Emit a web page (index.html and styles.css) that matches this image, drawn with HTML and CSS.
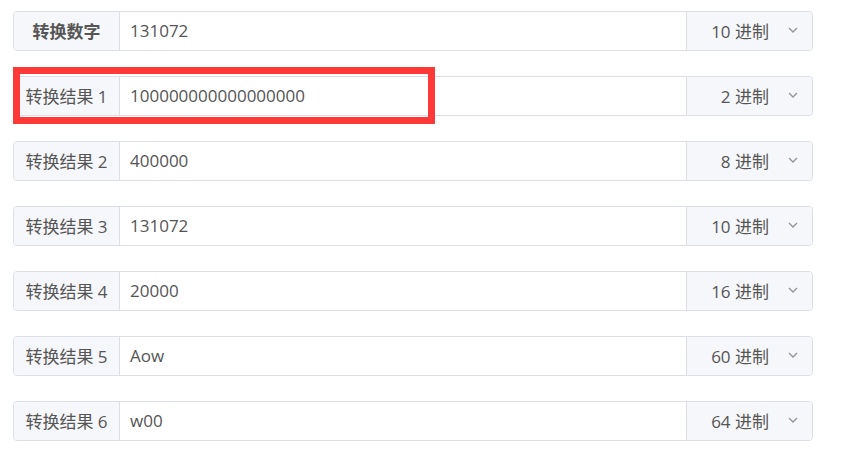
FILE: index.html
```html
<!DOCTYPE html>
<html lang="zh-CN">
<head>
    <meta charset="UTF-8">
    <meta name="viewport" content="width=device-width, initial-scale=1.0">
    <title>进制转换</title>
    <link rel="stylesheet" href="styles.css">
</head>
<body>
    <div class="converter">
        <div class="input-group">
            <div class="prepend prepend-bold">转换数字</div>
            <div class="value">131072</div>
            <div class="append">10 进制<svg class="chevron" viewBox="0 0 10 6"><polyline points="1,1 5,5 9,1"/></svg></div>
        </div>
        <div class="input-group">
            <div class="prepend">转换结果 1</div>
            <div class="value">100000000000000000</div>
            <div class="append">2 进制<svg class="chevron" viewBox="0 0 10 6"><polyline points="1,1 5,5 9,1"/></svg></div>
            <div class="highlight"></div>
        </div>
        <div class="input-group">
            <div class="prepend">转换结果 2</div>
            <div class="value">400000</div>
            <div class="append">8 进制<svg class="chevron" viewBox="0 0 10 6"><polyline points="1,1 5,5 9,1"/></svg></div>
        </div>
        <div class="input-group">
            <div class="prepend">转换结果 3</div>
            <div class="value">131072</div>
            <div class="append">10 进制<svg class="chevron" viewBox="0 0 10 6"><polyline points="1,1 5,5 9,1"/></svg></div>
        </div>
        <div class="input-group">
            <div class="prepend">转换结果 4</div>
            <div class="value">20000</div>
            <div class="append">16 进制<svg class="chevron" viewBox="0 0 10 6"><polyline points="1,1 5,5 9,1"/></svg></div>
        </div>
        <div class="input-group">
            <div class="prepend">转换结果 5</div>
            <div class="value">Aow</div>
            <div class="append">60 进制<svg class="chevron" viewBox="0 0 10 6"><polyline points="1,1 5,5 9,1"/></svg></div>
        </div>
        <div class="input-group">
            <div class="prepend">转换结果 6</div>
            <div class="value">w00</div>
            <div class="append">64 进制<svg class="chevron" viewBox="0 0 10 6"><polyline points="1,1 5,5 9,1"/></svg></div>
        </div>
    </div>
</body>
</html>
```

FILE: styles.css
```css
body {
    margin: 0;
    font-family: "Open Sans", "Noto Sans CJK SC", sans-serif;
    font-size: 17px;
    color: #555;
    background: #fff;
}
.converter {
    padding: 11px 36px 0 13px;
}
.input-group {
    position: relative;
    display: flex;
    height: 40px;
    box-sizing: border-box;
    border: 1px solid #dcdfe6;
    border-radius: 4px;
    margin-bottom: 25px;
}
.prepend {
    width: 106px;
    flex: none;
    display: flex;
    align-items: center;
    justify-content: center;
    padding-bottom: 2px;
    box-sizing: border-box;
    background-color: #f5f7fa;
    border-right: 1px solid #dcdfe6;
    border-radius: 4px 0 0 4px;
}
.prepend-bold {
    font-weight: bold;
}
.value {
    flex: 1;
    display: flex;
    align-items: center;
    padding-left: 10px;
    padding-bottom: 2px;
}
.append {
    width: 126px;
    flex: none;
    display: flex;
    align-items: center;
    justify-content: flex-end;
    padding-right: 14px;
    padding-bottom: 2px;
    box-sizing: border-box;
    background-color: #f5f7fa;
    border-left: 1px solid #dcdfe6;
    border-radius: 0 4px 4px 0;
}
.chevron {
    width: 10px;
    height: 6px;
    margin-left: 19px;
    fill: none;
    stroke: #909399;
    stroke-width: 1.3;
}
.highlight {
    position: absolute;
    left: -1px;
    top: -10px;
    width: 422px;
    height: 57px;
    box-sizing: border-box;
    border: 7px solid #ff3838;
}
```
